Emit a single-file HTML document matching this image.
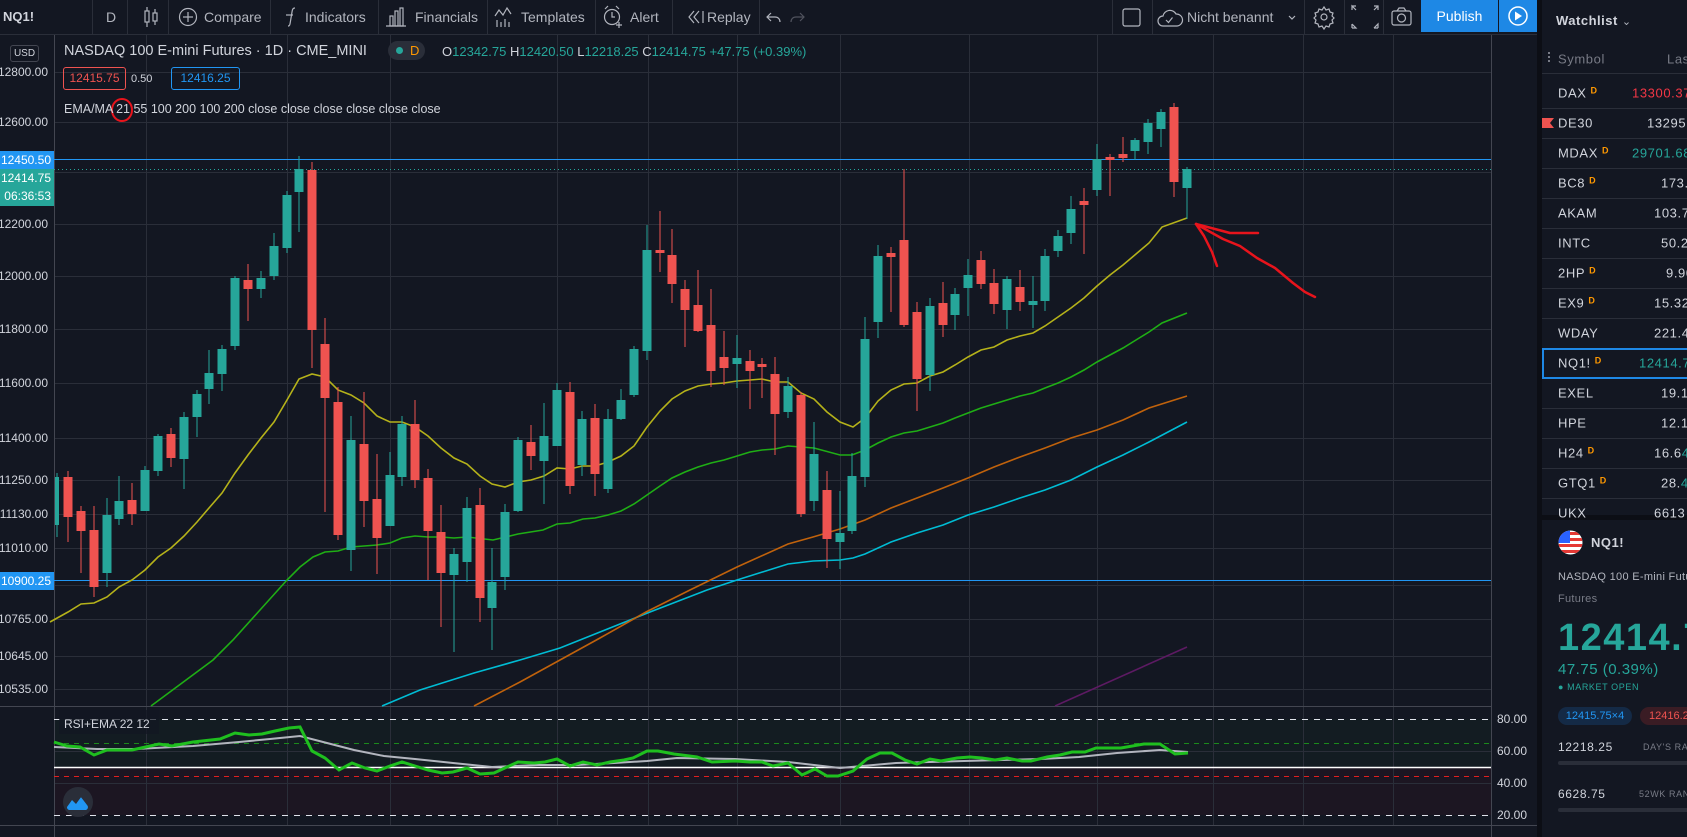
<!DOCTYPE html>
<html><head><meta charset="utf-8">
<style>
*{margin:0;padding:0;box-sizing:border-box}
body{width:1687px;height:837px;background:#131722;overflow:hidden;position:relative;font-family:"Liberation Sans",sans-serif;color:#d1d4dc}
.a{position:absolute;white-space:nowrap}
.tb{font-size:14px;color:#b2b5be;top:9px}
.pl{font-size:12px;right:1639px;text-align:right;transform:translateY(-50%)}
.wl{font-size:13px;letter-spacing:.6px;transform:translateY(-50%)}
.sup{color:#ff9800;font-size:9px;vertical-align:top;margin-left:4px;font-weight:bold}
</style></head><body>

<!-- toolbar -->
<div class="a" style="left:0;top:0;width:1537px;height:35px;border-bottom:1px solid #2a2e39"></div>
<div class="a tb" style="left:3px;color:#d1d4dc;font-weight:bold;font-size:13px">NQ1!</div>
<svg class="a" style="left:0;top:0" width="1537" height="35">
<g stroke="#2a2e39" stroke-width="1">
<line x1="92.5" y1="0" x2="92.5" y2="35"/><line x1="127.5" y1="0" x2="127.5" y2="35"/><line x1="168.5" y1="0" x2="168.5" y2="35"/><line x1="270.5" y1="0" x2="270.5" y2="35"/><line x1="378.5" y1="0" x2="378.5" y2="35"/><line x1="487.5" y1="0" x2="487.5" y2="35"/><line x1="595.5" y1="0" x2="595.5" y2="35"/><line x1="672.5" y1="0" x2="672.5" y2="35"/><line x1="759.5" y1="0" x2="759.5" y2="35"/><line x1="1112.5" y1="0" x2="1112.5" y2="35"/><line x1="1152.5" y1="0" x2="1152.5" y2="35"/><line x1="1304.5" y1="0" x2="1304.5" y2="35"/><line x1="1344.5" y1="0" x2="1344.5" y2="35"/><line x1="1383.5" y1="0" x2="1383.5" y2="35"/>
</g>
<g stroke="#b2b5be" fill="none" stroke-width="1.2">
<rect x="145" y="11" width="4" height="11"/><line x1="147" y1="7" x2="147" y2="11"/><line x1="147" y1="22" x2="147" y2="27"/><rect x="153" y="13" width="4" height="8"/><line x1="155" y1="9" x2="155" y2="13"/><line x1="155" y1="21" x2="155" y2="25"/>
<circle cx="188" cy="17" r="8.5"/><line x1="188" y1="12" x2="188" y2="22"/><line x1="183" y1="17" x2="193" y2="17"/>
<path d="M288 26c2 0 2-2 2.5-5l1.5-9c.5-3 1-4 3-4"/><line x1="286" y1="15" x2="293" y2="15"/>
<rect x="390" y="16" width="3" height="10"/><rect x="395" y="11" width="3" height="15"/><rect x="400" y="8" width="3" height="18"/><line x1="386" y1="26" x2="406" y2="26"/>
<path d="M495 16l4-6 4 5 4-7 4 6"/><line x1="497" y1="20" x2="497" y2="27"/><line x1="501" y1="22" x2="501" y2="27"/><line x1="505" y1="19" x2="505" y2="27"/><line x1="509" y1="22" x2="509" y2="27"/>
<circle cx="612" cy="17" r="7.5"/><path d="M612 12v5h3"/><path d="M605 9l3-3M619 9l-3-3"/><path d="M616 25h6M619 22v6"/>
<path d="M694 11l-5 6 5 6M699 11l-5 6 5 6"/><line x1="703" y1="11" x2="703" y2="23"/>
<path d="M771 13l-4 4 4 4M767 17h8c3 0 5 2 5 5" /><path d="M800 13l4 4-4 4" stroke="#50535e"/><path d="M804 17h-8c-3 0-5 2-5 5" stroke="#50535e"/>
<rect x="1123" y="9" width="17" height="17" rx="2"/>
<path d="M1167 26h-4a5 5 0 0 1 0-10a7 7 0 0 1 13-2a5.5 5.5 0 0 1 1 12z"/><path d="M1166 20l2.5 2.5 4-5"/>
<path d="M1289 16l3 3 3-3"/>
<g transform="translate(94 0)"><circle cx="1230" cy="17" r="3"/><path d="M1230 7l2 3 3-1 1 3 3 1-1 3 2 2-2 2 1 3-3 1-1 3-3-1-2 3-2-3-3 1-1-3-3-1 1-3-2-2 2-2-1-3 3-1 1-3 3 1z"/></g>
<path d="M1356 10l-4-4v4M1352 6h4M1374 6l4 0v4M1378 6l-4 4M1352 28v-4M1352 28h4l-4-4M1378 28h-4M1378 28v-4l-4 4"/>
<rect x="1392" y="11" width="19" height="14" rx="2"/><circle cx="1401.5" cy="18" r="4"/><path d="M1397 11l2-3h5l2 3"/>
</g>
</svg>
<div class="a tb" style="left:106px;color:#b2b5be">D</div>
<div class="a tb" style="left:204px">Compare</div>
<div class="a tb" style="left:305px">Indicators</div>
<div class="a tb" style="left:415px">Financials</div>
<div class="a tb" style="left:521px">Templates</div>
<div class="a tb" style="left:630px">Alert</div>
<div class="a tb" style="left:707px">Replay</div>
<div class="a tb" style="left:1187px">Nicht benannt</div>
<div class="a" style="left:1421px;top:0;width:77px;height:32px;background:#1e88e5;color:#fff;font-size:14px;text-align:center;line-height:32px">Publish</div>
<div class="a" style="left:1499px;top:0;width:38px;height:32px;background:#1e88e5"></div>
<svg class="a" style="left:1499px;top:0" width="38" height="32"><circle cx="19" cy="16" r="9" stroke="#fff" stroke-width="1.5" fill="none"/><path d="M16 11.5v9l7-4.5z" fill="#fff"/></svg>

<!-- chart svg -->
<svg class="a" style="left:0;top:35px" width="1537" height="802" viewBox="0 35 1537 802">
<rect x="1491" y="706" width="46" height="120" fill="#131722"/>
<rect x="54" y="719" width="1437" height="48" fill="#131c22"/>
<rect x="54" y="767" width="1437" height="48" fill="#1c1622"/>
<g stroke="#2a2e39" stroke-width="1">
<line x1="54" x2="1491" y1="72.5" y2="72.5"/><line x1="54" x2="1491" y1="122.5" y2="122.5"/><line x1="54" x2="1491" y1="172.5" y2="172.5"/><line x1="54" x2="1491" y1="224.5" y2="224.5"/><line x1="54" x2="1491" y1="276.5" y2="276.5"/><line x1="54" x2="1491" y1="329.5" y2="329.5"/><line x1="54" x2="1491" y1="383.5" y2="383.5"/><line x1="54" x2="1491" y1="438.5" y2="438.5"/><line x1="54" x2="1491" y1="480.5" y2="480.5"/><line x1="54" x2="1491" y1="514.5" y2="514.5"/><line x1="54" x2="1491" y1="548.5" y2="548.5"/><line x1="54" x2="1491" y1="585.5" y2="585.5"/><line x1="54" x2="1491" y1="619.5" y2="619.5"/><line x1="54" x2="1491" y1="656.5" y2="656.5"/><line x1="54" x2="1491" y1="689.5" y2="689.5"/>
<line x1="54" x2="1491" y1="751.5" y2="751.5"/><line x1="54" x2="1491" y1="783.5" y2="783.5"/>
<line x1="146.5" x2="146.5" y1="35" y2="826"/><line x1="287.5" x2="287.5" y1="35" y2="826"/><line x1="390.5" x2="390.5" y1="35" y2="826"/><line x1="557.5" x2="557.5" y1="35" y2="826"/><line x1="648.5" x2="648.5" y1="35" y2="826"/><line x1="737.5" x2="737.5" y1="35" y2="826"/><line x1="840.5" x2="840.5" y1="35" y2="826"/><line x1="969.5" x2="969.5" y1="35" y2="826"/><line x1="1097.5" x2="1097.5" y1="35" y2="826"/><line x1="1213.5" x2="1213.5" y1="35" y2="826"/><line x1="1303.5" x2="1303.5" y1="35" y2="826"/><line x1="1393.5" x2="1393.5" y1="35" y2="826"/>
</g>
<g stroke="#434651" stroke-width="1">
<line x1="54.5" x2="54.5" y1="35" y2="837"/><line x1="1491.5" x2="1491.5" y1="35" y2="837"/>
<line x1="0" x2="1491" y1="706.5" y2="706.5"/><line x1="0" x2="1537" y1="825.5" y2="825.5"/>
</g>
<line x1="54" x2="1491" y1="159.5" y2="159.5" stroke="#2196f3"/>
<line x1="54" x2="1491" y1="169.5" y2="169.5" stroke="#26a69a" stroke-dasharray="1 3"/>
<line x1="54" x2="1491" y1="580.5" y2="580.5" stroke="#2196f3"/>
<g fill="none" stroke-width="1.6">
<polyline stroke="#5d1a63" points="1055,706 1187,647"/>
<polyline stroke="#00bcd4" points="382,706 420,690 474,673 520,660 560,648 600,632 650,612 707,590 737,580 788,564 813,561 840,560 853,558 865,554 891,542 917,533 943,525 968,515 994,507 1020,498 1045,490 1071,480 1097,467 1123,455 1149,442 1187,422"/>
<polyline stroke="#c0620c" points="474,706 520,682 560,660 600,638 646,612 690,590 737,567 788,544 813,537 840,529 865,520 891,508 917,498 943,488 968,478 994,467 1020,457 1045,448 1071,438 1097,430 1123,420 1149,408 1187,396"/>
<polyline stroke="#1fae15" points="151,706 213,660 233,640 260,610 287,580 300,567 313,557 325,552 338,551 351,547 364,546 377,545 390,543 402,538 415,536 428,537 441,537 454,538 467,537 493,540 518,534 543,530 557,524 570,523 583,519 595,518 608,515 621,511 634,504 647,495 660,486 672,478 685,472 698,467 711,463 724,460 737,456 750,452 762,450 775,449 788,446 814,448 840,455 852,455 865,450 878,443 891,437 904,433 917,431 930,427 943,423 955,418 968,413 981,408 994,404 1007,400 1020,396 1033,393 1045,388 1058,383 1071,377 1084,370 1097,362 1110,355 1123,348 1136,340 1149,332 1162,323 1187,313"/>
<polyline stroke="#b5b21a" points="50,622 68,612 81,604 94,603 107,597 119,587 132,580 145,570 158,557 171,548 184,536 197,522 209,508 222,493 235,473 248,455 261,438 274,422 287,400 299,379 312,374 325,377 338,390 351,395 364,403 377,416 390,422 402,422 415,427 428,436 441,448 454,458 467,464 480,476 492,484 505,487 518,482 531,480 544,476 557,468 570,469 582,466 595,466 608,462 621,456 634,446 647,427 660,411 672,399 685,391 698,386 711,384 724,383 737,381 750,380 762,379 775,382 788,382 801,393 814,399 827,412 840,422 853,427 865,418 878,401 891,390 904,384 917,383 930,376 943,372 955,365 968,357 981,350 994,347 1007,340 1020,336 1033,333 1045,326 1058,317 1071,308 1084,298 1097,286 1110,275 1123,265 1136,254 1149,243 1162,227 1187,218"/>
</g>
<g>
<g fill="#26a69a" stroke="#26a69a">
<line x1="57" x2="57" y1="473" y2="537"/><rect x="55" y="477" width="4" height="48" stroke="none"/>
<line x1="107" x2="107" y1="498" y2="587"/><rect x="102.5" y="515" width="9" height="58" stroke="none"/>
<line x1="119" x2="119" y1="476" y2="525"/><rect x="114.5" y="501" width="9" height="18" stroke="none"/>
<line x1="145" x2="145" y1="466" y2="511"/><rect x="140.5" y="470" width="9" height="41" stroke="none"/>
<line x1="158" x2="158" y1="434" y2="476"/><rect x="153.5" y="436" width="9" height="35" stroke="none"/>
<line x1="184" x2="184" y1="412" y2="489"/><rect x="179.5" y="417" width="9" height="42" stroke="none"/>
<line x1="197" x2="197" y1="390" y2="437"/><rect x="192.5" y="394" width="9" height="23" stroke="none"/>
<line x1="209" x2="209" y1="350" y2="404"/><rect x="204.5" y="373" width="9" height="16" stroke="none"/>
<line x1="222" x2="222" y1="345" y2="391"/><rect x="217.5" y="349" width="9" height="25" stroke="none"/>
<line x1="235" x2="235" y1="276" y2="350"/><rect x="230.5" y="278" width="9" height="68" stroke="none"/>
<line x1="261" x2="261" y1="271" y2="298"/><rect x="256.5" y="278" width="9" height="11" stroke="none"/>
<line x1="274" x2="274" y1="233" y2="280"/><rect x="269.5" y="246" width="9" height="30" stroke="none"/>
<line x1="287" x2="287" y1="191" y2="253"/><rect x="282.5" y="195" width="9" height="53" stroke="none"/>
<line x1="299" x2="299" y1="156" y2="232"/><rect x="294.5" y="169" width="9" height="23" stroke="none"/>
<line x1="351" x2="351" y1="416" y2="571"/><rect x="346.5" y="440" width="9" height="110" stroke="none"/>
<line x1="390" x2="390" y1="452" y2="526"/><rect x="385.5" y="475" width="9" height="51" stroke="none"/>
<line x1="402" x2="402" y1="416" y2="486"/><rect x="397.5" y="424" width="9" height="53" stroke="none"/>
<line x1="454" x2="454" y1="548" y2="652"/><rect x="449.5" y="554" width="9" height="21" stroke="none"/>
<line x1="467" x2="467" y1="497" y2="582"/><rect x="462.5" y="508" width="9" height="54" stroke="none"/>
<line x1="492" x2="492" y1="548" y2="650"/><rect x="487.5" y="582" width="9" height="26" stroke="none"/>
<line x1="505" x2="505" y1="504" y2="590"/><rect x="500.5" y="512" width="9" height="65" stroke="none"/>
<line x1="518" x2="518" y1="437" y2="512"/><rect x="513.5" y="440" width="9" height="71" stroke="none"/>
<line x1="544" x2="544" y1="403" y2="504"/><rect x="539.5" y="436" width="9" height="25" stroke="none"/>
<line x1="557" x2="557" y1="383" y2="446"/><rect x="552.5" y="390" width="9" height="56" stroke="none"/>
<line x1="582" x2="582" y1="411" y2="476"/><rect x="577.5" y="419" width="9" height="46" stroke="none"/>
<line x1="608" x2="608" y1="409" y2="493"/><rect x="603.5" y="419" width="9" height="70" stroke="none"/>
<line x1="621" x2="621" y1="389" y2="420"/><rect x="616.5" y="400" width="9" height="19" stroke="none"/>
<line x1="634" x2="634" y1="346" y2="397"/><rect x="629.5" y="349" width="9" height="46" stroke="none"/>
<line x1="647" x2="647" y1="225" y2="360"/><rect x="642.5" y="250" width="9" height="101" stroke="none"/>
<line x1="737" x2="737" y1="335" y2="388"/><rect x="732.5" y="358" width="9" height="6" stroke="none"/>
<line x1="788" x2="788" y1="377" y2="418"/><rect x="783.5" y="386" width="9" height="26" stroke="none"/>
<line x1="814" x2="814" y1="422" y2="511"/><rect x="809.5" y="454" width="9" height="47" stroke="none"/>
<line x1="840" x2="840" y1="491" y2="569"/><rect x="835.5" y="533" width="9" height="9" stroke="none"/>
<line x1="852" x2="852" y1="453" y2="534"/><rect x="847.5" y="476" width="9" height="55" stroke="none"/>
<line x1="865" x2="865" y1="317" y2="487"/><rect x="860.5" y="339" width="9" height="138" stroke="none"/>
<line x1="878" x2="878" y1="245" y2="338"/><rect x="873.5" y="256" width="9" height="66" stroke="none"/>
<line x1="930" x2="930" y1="298" y2="391"/><rect x="925.5" y="306" width="9" height="69" stroke="none"/>
<line x1="955" x2="955" y1="288" y2="330"/><rect x="950.5" y="294" width="9" height="21" stroke="none"/>
<line x1="968" x2="968" y1="259" y2="316"/><rect x="963.5" y="275" width="9" height="13" stroke="none"/>
<line x1="1007" x2="1007" y1="276" y2="329"/><rect x="1002.5" y="279" width="9" height="31" stroke="none"/>
<line x1="1033" x2="1033" y1="276" y2="328"/><rect x="1028.5" y="301" width="9" height="4" stroke="none"/>
<line x1="1045" x2="1045" y1="249" y2="311"/><rect x="1040.5" y="256" width="9" height="45" stroke="none"/>
<line x1="1058" x2="1058" y1="230" y2="257"/><rect x="1053.5" y="236" width="9" height="15" stroke="none"/>
<line x1="1071" x2="1071" y1="196" y2="244"/><rect x="1066.5" y="209" width="9" height="24" stroke="none"/>
<line x1="1097" x2="1097" y1="144" y2="196"/><rect x="1092.5" y="159" width="9" height="31" stroke="none"/>
<line x1="1135" x2="1135" y1="138" y2="160"/><rect x="1130.5" y="140" width="9" height="11" stroke="none"/>
<line x1="1148" x2="1148" y1="119" y2="154"/><rect x="1143.5" y="123" width="9" height="19" stroke="none"/>
<line x1="1161" x2="1161" y1="109" y2="147"/><rect x="1156.5" y="112" width="9" height="17" stroke="none"/>
<line x1="1187" x2="1187" y1="167" y2="219"/><rect x="1182.5" y="169" width="9" height="19" stroke="none"/>
</g>
<g fill="#ef5350" stroke="#ef5350">
<line x1="68" x2="68" y1="471" y2="542"/><rect x="63.5" y="477" width="9" height="40" stroke="none"/>
<line x1="81" x2="81" y1="506" y2="573"/><rect x="76.5" y="511" width="9" height="20" stroke="none"/>
<line x1="94" x2="94" y1="506" y2="597"/><rect x="89.5" y="530" width="9" height="57" stroke="none"/>
<line x1="132" x2="132" y1="483" y2="525"/><rect x="127.5" y="500" width="9" height="14" stroke="none"/>
<line x1="171" x2="171" y1="428" y2="467"/><rect x="166.5" y="434" width="9" height="24" stroke="none"/>
<line x1="248" x2="248" y1="264" y2="321"/><rect x="243.5" y="280" width="9" height="9" stroke="none"/>
<line x1="312" x2="312" y1="162" y2="368"/><rect x="307.5" y="170" width="9" height="160" stroke="none"/>
<line x1="325" x2="325" y1="318" y2="512"/><rect x="320.5" y="344" width="9" height="54" stroke="none"/>
<line x1="338" x2="338" y1="387" y2="540"/><rect x="333.5" y="402" width="9" height="133" stroke="none"/>
<line x1="364" x2="364" y1="392" y2="527"/><rect x="359.5" y="444" width="9" height="57" stroke="none"/>
<line x1="377" x2="377" y1="454" y2="574"/><rect x="372.5" y="499" width="9" height="39" stroke="none"/>
<line x1="415" x2="415" y1="400" y2="488"/><rect x="410.5" y="424" width="9" height="56" stroke="none"/>
<line x1="428" x2="428" y1="469" y2="580"/><rect x="423.5" y="478" width="9" height="53" stroke="none"/>
<line x1="441" x2="441" y1="505" y2="627"/><rect x="436.5" y="532" width="9" height="41" stroke="none"/>
<line x1="480" x2="480" y1="488" y2="622"/><rect x="475.5" y="505" width="9" height="93" stroke="none"/>
<line x1="531" x2="531" y1="425" y2="470"/><rect x="526.5" y="442" width="9" height="14" stroke="none"/>
<line x1="570" x2="570" y1="382" y2="494"/><rect x="565.5" y="392" width="9" height="94" stroke="none"/>
<line x1="595" x2="595" y1="404" y2="496"/><rect x="590.5" y="418" width="9" height="56" stroke="none"/>
<line x1="660" x2="660" y1="211" y2="272"/><rect x="655.5" y="250" width="9" height="3" stroke="none"/>
<line x1="672" x2="672" y1="229" y2="303"/><rect x="667.5" y="255" width="9" height="29" stroke="none"/>
<line x1="685" x2="685" y1="280" y2="347"/><rect x="680.5" y="289" width="9" height="21" stroke="none"/>
<line x1="698" x2="698" y1="270" y2="332"/><rect x="693.5" y="305" width="9" height="26" stroke="none"/>
<line x1="711" x2="711" y1="289" y2="387"/><rect x="706.5" y="325" width="9" height="46" stroke="none"/>
<line x1="724" x2="724" y1="331" y2="385"/><rect x="719.5" y="357" width="9" height="11" stroke="none"/>
<line x1="750" x2="750" y1="350" y2="409"/><rect x="745.5" y="361" width="9" height="10" stroke="none"/>
<line x1="762" x2="762" y1="358" y2="398"/><rect x="757.5" y="364" width="9" height="3" stroke="none"/>
<line x1="775" x2="775" y1="357" y2="455"/><rect x="770.5" y="374" width="9" height="40" stroke="none"/>
<line x1="801" x2="801" y1="392" y2="517"/><rect x="796.5" y="395" width="9" height="119" stroke="none"/>
<line x1="827" x2="827" y1="471" y2="568"/><rect x="822.5" y="490" width="9" height="49" stroke="none"/>
<line x1="891" x2="891" y1="247" y2="312"/><rect x="886.5" y="253" width="9" height="4" stroke="none"/>
<line x1="904" x2="904" y1="169" y2="327"/><rect x="899.5" y="240" width="9" height="85" stroke="none"/>
<line x1="917" x2="917" y1="302" y2="411"/><rect x="912.5" y="312" width="9" height="67" stroke="none"/>
<line x1="943" x2="943" y1="282" y2="337"/><rect x="938.5" y="303" width="9" height="22" stroke="none"/>
<line x1="981" x2="981" y1="251" y2="289"/><rect x="976.5" y="260" width="9" height="24" stroke="none"/>
<line x1="994" x2="994" y1="269" y2="314"/><rect x="989.5" y="283" width="9" height="21" stroke="none"/>
<line x1="1020" x2="1020" y1="270" y2="311"/><rect x="1015.5" y="287" width="9" height="15" stroke="none"/>
<line x1="1084" x2="1084" y1="188" y2="254"/><rect x="1079.5" y="201" width="9" height="4" stroke="none"/>
<line x1="1110" x2="1110" y1="154" y2="196"/><rect x="1105.5" y="157" width="9" height="3" stroke="none"/>
<line x1="1123" x2="1123" y1="137" y2="162"/><rect x="1118.5" y="154" width="9" height="4" stroke="none"/>
<line x1="1174" x2="1174" y1="103" y2="197"/><rect x="1169.5" y="107" width="9" height="75" stroke="none"/>
</g>
</g>
<ellipse cx="122" cy="110" rx="10" ry="11" fill="none" stroke="#e8141c" stroke-width="2"/>
<g fill="none" stroke="#e8141c" stroke-width="2.5" stroke-linecap="round" stroke-linejoin="round">
<polyline points="1196,224 1215,229 1230,233 1258,233"/>
<polyline points="1196,224 1204,236 1212,252 1217,266"/>
<polyline points="1196,224 1223,239 1240,246 1257,258 1275,268 1293,283 1305,292 1315,297"/>
</g>
<g fill="none">
<line x1="54" x2="1491" y1="719.5" y2="719.5" stroke="#e0e3eb" stroke-dasharray="6 6"/>
<line x1="54" x2="1491" y1="743.5" y2="743.5" stroke="#1b8a1b" stroke-dasharray="5 5"/>
<line x1="54" x2="1491" y1="767.5" y2="767.5" stroke="#ffffff" stroke-width="1.5"/>
<line x1="54" x2="1491" y1="776.5" y2="776.5" stroke="#e02020" stroke-dasharray="5 5"/>
<line x1="54" x2="1491" y1="815.5" y2="815.5" stroke="#e0e3eb" stroke-dasharray="6 6"/>
<polyline stroke="#b2b5be" stroke-width="2" points="54,747 97,749 136,749 193,746 239,742 270,739 300,736 327,743 354,750 384,756 415,759 453,763 492,767 538,765 576,765 614,763 647,761 677,758 735,759 788,762 840,768 896,763 964,761 1041,759 1079,757 1117,753 1160,750 1188,752"/>
<polyline stroke="#1fbf1f" stroke-width="3" points="54,742 67,746 80,747 94,755 107,750 132,750 159,744 172,746 193,742 220,739 235,733 249,735 262,734 275,731 289,728 300,727 312,751 325,758 339,770 352,763 365,768 377,771 390,766 402,762 415,766 428,770 442,773 453,772 467,768 480,774 494,773 507,767 518,762 534,763 545,762 557,759 570,766 583,762 597,765 610,762 624,760 633,758 647,751 658,751 674,754 697,757 712,762 735,761 750,762 762,762 773,766 788,763 802,775 815,769 827,776 838,776 853,771 867,759 880,753 892,753 905,760 917,764 930,759 941,761 957,758 970,757 982,758 995,760 1007,758 1022,761 1031,761 1047,757 1060,755 1072,752 1085,752 1096,748 1121,748 1144,744 1160,744 1175,754 1188,753"/>
</g>
<rect x="59" y="710" width="100" height="24" fill="#131722" opacity=".7"/>
<circle cx="78" cy="802" r="15" fill="#2a2e39"/>
<path d="M67 807l5-7 4 4 5-7 6 8a3 3 0 0 1-1 5h-17a3 3 0 0 1-2-3z" fill="#2196f3"/>
<path d="M68 803l4-5 4 4 5-6 5 6" fill="none" stroke="#2a2e39" stroke-width="1.5"/>
</svg>

<div class="a" style="left:10px;top:45px;width:29px;height:17px;border:1px solid #434651;border-radius:3px;font-size:10px;text-align:center;line-height:15px">USD</div>
<div class="a" style="left:64px;top:43px;font-size:14.5px">NASDAQ 100 E-mini Futures · 1D · CME_MINI</div>
<div class="a" style="left:388px;top:41px;width:37px;height:19px;border-radius:10px;background:#2a2e39"></div>
<div class="a" style="left:396px;top:47px;width:7px;height:7px;border-radius:50%;background:#26a69a"></div>
<div class="a" style="left:410px;top:43px;font-size:13px;color:#ff9800">D</div>
<div class="a" style="left:442px;top:44px;font-size:13px">O<span style="color:#26a69a">12342.75</span> H<span style="color:#26a69a">12420.50</span> L<span style="color:#26a69a">12218.25</span> C<span style="color:#26a69a">12414.75 +47.75 (+0.39%)</span></div>
<div class="a" style="left:63px;top:67px;width:63px;height:23px;border:1px solid #ef5350;border-radius:3px;color:#ef5350;font-size:12px;text-align:center;line-height:21px">12415.75</div>
<div class="a" style="left:131px;top:73px;font-size:11px">0.50</div>
<div class="a" style="left:171px;top:67px;width:69px;height:23px;border:1px solid #2196f3;border-radius:3px;color:#2196f3;font-size:12px;text-align:center;line-height:21px">12416.25</div>
<div class="a" style="left:64px;top:102px;font-size:12.5px">EMA/MA 21 55 100 200 100 200 close close close close close close</div>
<div class="a" style="left:64px;top:717px;font-size:12px">RSI+EMA 22 12</div>

<div class="a pl" style="top:72px">12800.00</div>
<div class="a pl" style="top:122px">12600.00</div>
<div class="a pl" style="top:224px">12200.00</div>
<div class="a pl" style="top:276px">12000.00</div>
<div class="a pl" style="top:329px">11800.00</div>
<div class="a pl" style="top:383px">11600.00</div>
<div class="a pl" style="top:438px">11400.00</div>
<div class="a pl" style="top:480px">11250.00</div>
<div class="a pl" style="top:514px">11130.00</div>
<div class="a pl" style="top:548px">11010.00</div>
<div class="a pl" style="top:619px">10765.00</div>
<div class="a pl" style="top:656px">10645.00</div>
<div class="a pl" style="top:689px">10535.00</div>
<div class="a" style="left:0;top:151px;width:54px;height:18px;background:#2196f3;color:#fff;font-size:12px;text-align:right;padding-right:3px;line-height:18px">12450.50</div>
<div class="a" style="left:0;top:169px;width:54px;height:37px;background:#26a69a;color:#fff;font-size:12px;text-align:right;padding-right:3px;line-height:18px">12414.75<br>06:36:53</div>
<div class="a" style="left:0;top:572px;width:54px;height:18px;background:#2196f3;color:#fff;font-size:12px;text-align:right;padding-right:3px;line-height:18px">10900.25</div>

<div class="a" style="left:1497px;top:712px;font-size:12px;line-height:14px">80.00</div>
<div class="a" style="left:1497px;top:744px;font-size:12px;line-height:14px">60.00</div>
<div class="a" style="left:1497px;top:776px;font-size:12px;line-height:14px">40.00</div>
<div class="a" style="left:1497px;top:808px;font-size:12px;line-height:14px">20.00</div>

<div class="a" style="left:1537px;top:0;width:5px;height:837px;background:#0c0e15"></div>
<div class="a" style="left:1542px;top:515px;width:145px;height:5px;background:#0c0e15"></div>
<div class="a" style="left:1556px;top:13px;font-size:13px;font-weight:bold;letter-spacing:.5px">Watchlist <span style="font-weight:normal;color:#b2b5be;font-size:11px">⌄</span></div>
<div class="a" style="left:1548px;top:52px;width:2px;height:2px;background:#787b86;box-shadow:0 4px #787b86,0 8px #787b86"></div>
<div class="a wl" style="left:1558px;top:59px;color:#787b86">Symbol</div>
<div class="a wl" style="left:1667px;top:59px;color:#787b86">Last</div>
<svg class="a" style="left:1542px;top:0" width="145" height="520"><g stroke="#2a2e39"><line x1="0" x2="145" y1="73.5" y2="73.5"/><line x1="0" x2="145" y1="108.5" y2="108.5"/><line x1="0" x2="145" y1="138.5" y2="138.5"/><line x1="0" x2="145" y1="168.5" y2="168.5"/><line x1="0" x2="145" y1="198.5" y2="198.5"/><line x1="0" x2="145" y1="228.5" y2="228.5"/><line x1="0" x2="145" y1="258.5" y2="258.5"/><line x1="0" x2="145" y1="288.5" y2="288.5"/><line x1="0" x2="145" y1="318.5" y2="318.5"/><line x1="0" x2="145" y1="408.5" y2="408.5"/><line x1="0" x2="145" y1="438.5" y2="438.5"/><line x1="0" x2="145" y1="468.5" y2="468.5"/><line x1="0" x2="145" y1="498.5" y2="498.5"/></g>
<rect x="1" y="349" width="150" height="29" fill="none" stroke="#1e88e5" stroke-width="2"/>
<path d="M0 118h12l-4 5 4 5h-12z" fill="#ef5350"/></svg>
<div class="a wl" style="left:1558px;top:93px">DAX<span class="sup">D</span></div><div class="a wl" style="left:1632px;top:93px;color:#f23645">13300.370</div>
<div class="a wl" style="left:1558px;top:123px">DE30</div><div class="a wl" style="left:1647px;top:123px">13295.<span style="color:#26a69a">5</span></div>
<div class="a wl" style="left:1558px;top:153px">MDAX<span class="sup">D</span></div><div class="a wl" style="left:1632px;top:153px;color:#26a69a">29701.680</div>
<div class="a wl" style="left:1558px;top:183px">BC8<span class="sup">D</span></div><div class="a wl" style="left:1661px;top:183px">173.4</div>
<div class="a wl" style="left:1558px;top:213px">AKAM</div><div class="a wl" style="left:1654px;top:213px">103.75</div>
<div class="a wl" style="left:1558px;top:243px">INTC</div><div class="a wl" style="left:1661px;top:243px">50.24</div>
<div class="a wl" style="left:1558px;top:273px">2HP<span class="sup">D</span></div><div class="a wl" style="left:1666px;top:273px">9.900</div>
<div class="a wl" style="left:1558px;top:303px">EX9<span class="sup">D</span></div><div class="a wl" style="left:1654px;top:303px">15.322</div>
<div class="a wl" style="left:1558px;top:333px">WDAY</div><div class="a wl" style="left:1654px;top:333px">221.45</div>
<div class="a wl" style="left:1558px;top:363px">NQ1!<span class="sup">D</span></div><div class="a wl" style="left:1639px;top:363px;color:#26a69a">12414.75</div>
<div class="a wl" style="left:1558px;top:393px">EXEL</div><div class="a wl" style="left:1661px;top:393px">19.11</div>
<div class="a wl" style="left:1558px;top:423px">HPE</div><div class="a wl" style="left:1661px;top:423px">12.14</div>
<div class="a wl" style="left:1558px;top:453px">H24<span class="sup">D</span></div><div class="a wl" style="left:1654px;top:453px">16.6<span style="color:#26a69a">44</span></div>
<div class="a wl" style="left:1558px;top:483px">GTQ1<span class="sup">D</span></div><div class="a wl" style="left:1661px;top:483px">28.<span style="color:#26a69a">4</span></div>
<div class="a wl" style="left:1558px;top:513px">UKX</div><div class="a wl" style="left:1654px;top:513px">6613</div>
<div class="a" style="left:1542px;top:520px;width:145px;height:317px;background:#131722"></div>

<svg class="a" style="left:1558px;top:530px" width="25" height="25"><defs><clipPath id="f"><circle cx="12.5" cy="12.5" r="12"/></clipPath></defs><g clip-path="url(#f)"><rect width="25" height="25" fill="#fff"/><rect y="2" width="25" height="3" fill="#e53935"/><rect y="8" width="25" height="3" fill="#e53935"/><rect y="14" width="25" height="3" fill="#e53935"/><rect y="20" width="25" height="3" fill="#e53935"/><rect width="12" height="13" fill="#2962ff"/></g></svg>
<div class="a" style="left:1591px;top:535px;font-size:13px;font-weight:bold;letter-spacing:.5px">NQ1!</div>
<div class="a" style="left:1558px;top:571px;font-size:11px;color:#b2b5be;letter-spacing:.3px">NASDAQ 100 E-mini Futures</div>
<div class="a" style="left:1558px;top:593px;font-size:11px;color:#787b86;letter-spacing:.3px">Futures</div>
<div class="a" style="left:1558px;top:617px;font-size:38px;font-weight:bold;color:#26a69a;letter-spacing:1.5px">12414.75</div>
<div class="a" style="left:1558px;top:661px;font-size:15px;color:#26a69a;letter-spacing:.5px">47.75 (0.39%)</div>
<div class="a" style="left:1558px;top:682px;font-size:9px;color:#26a69a;letter-spacing:.6px">● MARKET OPEN</div>
<div class="a" style="left:1558px;top:707px;width:74px;height:18px;border-radius:9px;background:#142a46;color:#2196f3;font-size:11px;text-align:center;line-height:18px">12415.75×4</div>
<div class="a" style="left:1640px;top:707px;width:70px;height:18px;border-radius:9px;background:#3a1c24;color:#ef5350;font-size:11px;padding-left:9px;line-height:18px">12416.25</div>
<div class="a" style="left:1558px;top:740px;font-size:12px;letter-spacing:.6px">12218.25</div>
<div class="a" style="left:1643px;top:742px;font-size:9px;color:#787b86;letter-spacing:.6px">DAY'S RANGE</div>
<div class="a" style="left:1558px;top:761px;width:140px;height:4px;border-radius:2px;background:#2a2e39"></div>
<div class="a" style="left:1558px;top:787px;font-size:12px;letter-spacing:.6px">6628.75</div>
<div class="a" style="left:1639px;top:789px;font-size:9px;color:#787b86;letter-spacing:.6px">52WK RANGE</div>
<div class="a" style="left:1558px;top:808px;width:140px;height:4px;border-radius:2px;background:#2a2e39"></div>
</body></html>
